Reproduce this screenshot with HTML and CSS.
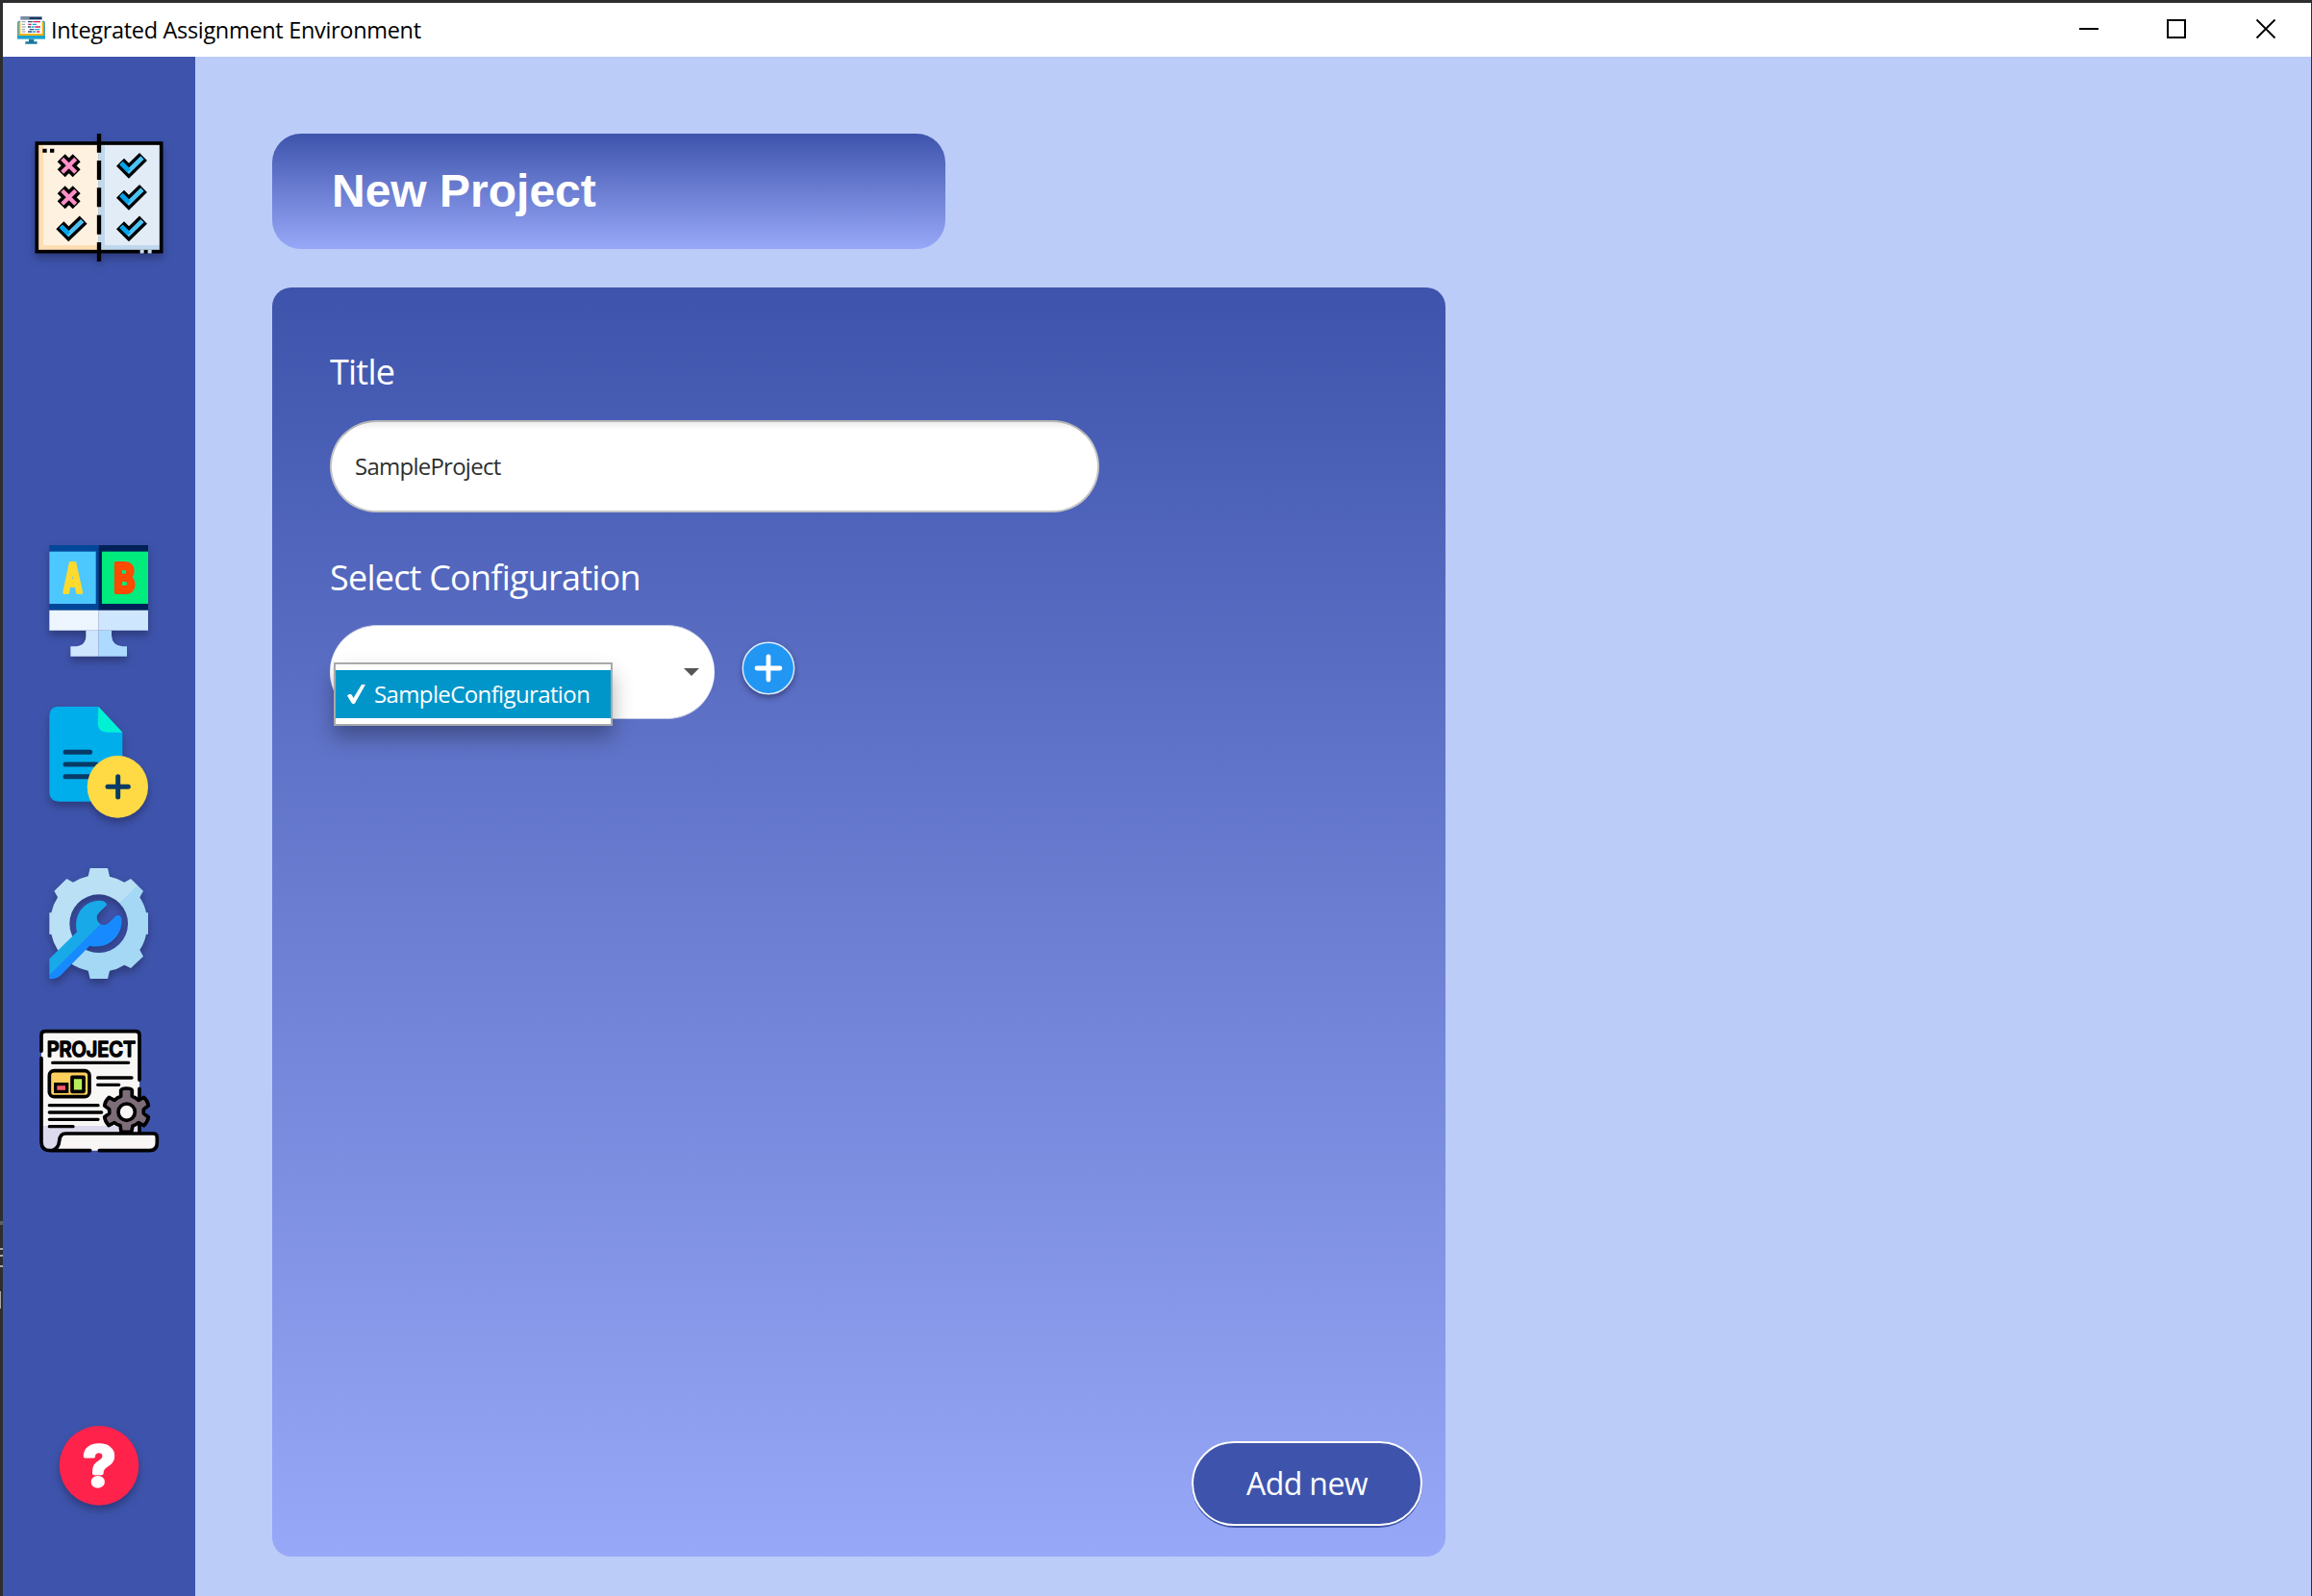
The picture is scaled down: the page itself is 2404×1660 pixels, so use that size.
FILE: index.html
```html
<!DOCTYPE html>
<html lang="en">
<head>
<meta charset="utf-8">
<title>Integrated Assignment Environment</title>
<link rel="stylesheet" href="styles.css">
</head>
<body>
<div class="window">
  <header class="titlebar">
    <svg class="app-icon" viewBox="0 0 87 87">
      <rect x="0" y="14" width="87" height="70" rx="5" fill="#4fa3b5"/>
      <rect x="5" y="18" width="77" height="44" fill="#ffb60a"/>
      <rect x="0" y="60" width="87" height="11" fill="#1aa3cf"/>
      <path d="M0 71H87V87H0Z" fill="#fff"/>
      <path d="M36 71H52V79H62V86H25V79H36Z" fill="#17789b"/>
      <rect x="10" y="0" width="67" height="54" fill="#fff"/>
      <path d="M10 0H77V11H10Z" fill="#7b8ca5"/>
      <path d="M38 3H76V9H38Z" fill="#123a63"/>
      <path d="M14 17H26M14 25H24M14 33H26M14 41H24M14 48H26" stroke="#8a96a8" stroke-width="3"/>
      <path d="M33 17H47M33 33H43M38 41H52M33 48H46" stroke="#2b4f78" stroke-width="4"/>
      <path d="M49 17H72M34 25H44M55 33H72M60 48H70" stroke="#d71c5b" stroke-width="4"/>
      <path d="M47 25H60M45 33H53M54 41H70M48 48H57" stroke="#1ba6d2" stroke-width="4"/>
    </svg>
    <span class="app-title">Integrated Assignment Environment</span>
    <svg class="controls" viewBox="0 0 212 24" fill="none" stroke="#000" stroke-width="2">
      <path d="M0 11H20"/><rect x="92" y="2" width="18" height="18"/><path d="M184.500 1.500L203.500 20.500M203.500 1.500L184.500 20.500" stroke-width="1.800"/>
    </svg>
  </header>
  <div class="body">
    <nav class="sidebar">
      <svg class="icon compare" viewBox="0 0 510 480">
        <path d="M55 72H248V410H55Z" fill="#fff1e0"/>
        <path d="M60 77H75V390H248V405H60Z" fill="#ffddb3"/>
        <path d="M248 72H442V410H248Z" fill="#e2ecf6"/>
        <path d="M248 77H267V390H437V405H248Z" fill="#c0d7ec"/>
        <rect x="55" y="72" width="388" height="338" fill="none" stroke="#000" stroke-width="11"/>
        <path d="M73 95H86M96 95H109" stroke="#000" stroke-width="12"/>
        <path d="M377 410H389M401 410H413" stroke="#c9dcef" stroke-width="11"/>
        <path d="M249 42V101M249 126V186M249 211V271M249 296V356M249 381V441" stroke="#000" stroke-width="13"/>
        <g fill="none">
          <path d="M131 118L179 166M179 118L131 166M131 217L179 265M179 217L131 265" stroke="#000" stroke-width="34"/>
          <path d="M134 121L176 163M176 121L134 163M134 220L176 262M176 220L134 262" stroke="#ff8fc8" stroke-width="13"/>
        </g>
        <g fill="none">
          <path d="M315 131L342 158L387 114M315 230L342 257L387 213M315 328L342 355L387 311M127 328L154 355L200 311" stroke="#000" stroke-width="34"/>
          <path d="M318 134L342 158L384 117M318 233L342 257L384 216M318 331L342 355L384 314M130 331L154 355L197 314" stroke="#4dc3f5" stroke-width="14"/>
          <path d="M318 134L342 158M318 233L342 257M318 331L342 355M130 331L154 355" stroke="#00a5ed" stroke-width="14"/>
        </g>
      </svg>
      <svg class="icon abtest" viewBox="0 0 450 450">
        <path d="M64 51H218V254H64Z" fill="#004799"/><path d="M218 51H372V254H218Z" fill="#002157"/>
        <rect x="64" y="71" width="145" height="163" fill="#4dc8ff"/><rect x="228" y="71" width="144" height="163" fill="#00ec7c"/>
        <path d="M64 254H218V317H64Z" fill="#edf5ff"/><path d="M218 254H372V317H218Z" fill="#cfe6ff"/>
        <path d="M178 317H218V398H130V367H145Q178 365 178 333Z" fill="#cfe6ff"/>
        <path d="M218 317H258V333Q260 365 292 367H306V398H218Z" fill="#addaff"/>
        <text class="glyph" x="108" y="198" font-size="124" textLength="58" lengthAdjust="spacingAndGlyphs" fill="#ffda2d" stroke="#ffda2d" stroke-width="12">A</text>
        <text class="glyph" x="265" y="198" font-size="124" textLength="66" lengthAdjust="spacingAndGlyphs" fill="#ff4b00" stroke="#ff4b00" stroke-width="12">B</text>
      </svg>
      <svg class="icon adddoc" viewBox="0 0 450 450">
        <path d="M90 45H217L292 125V341H92Q64 339 64 313V73Q64 47 90 45Z" fill="#00aeec"/>
        <path d="M217 45L292 125H245Q215 125 215 97Z" fill="#00f1d4"/>
        <path d="M114 187H191M114 225H210M114 263H200" stroke="#083b66" stroke-width="15" stroke-linecap="round"/>
        <ellipse cx="277" cy="295" rx="95" ry="97" fill="#ffda44"/>
        <path d="M246 295H310M278 263V327" stroke="#083b66" stroke-width="15" stroke-linecap="round"/>
      </svg>
      <svg class="icon settings" viewBox="0 0 450 450">
        <defs>
          <clipPath id="edge"><path d="M64 0H372V450H64Z"/></clipPath>
          <mask id="hole"><path d="M0 0H450V450H0Z" fill="#fff"/><circle cx="218" cy="212" r="91" fill="#000"/></mask>
          <linearGradient id="gear" x1="64" y1="58" x2="372" y2="366" gradientUnits="userSpaceOnUse"><stop offset=".5" stop-color="#b9e0f5"/><stop offset=".5" stop-color="#a4d8f5"/></linearGradient>
          <linearGradient id="wrench" x1="64" y1="58" x2="372" y2="366" gradientUnits="userSpaceOnUse"><stop offset=".51" stop-color="#18aae8"/><stop offset=".51" stop-color="#178aff"/></linearGradient>
        </defs>
        <g clip-path="url(#edge)"><g mask="url(#hole)">
          <path fill="url(#gear)" d="M191 39H246L252 65Q276 70 298 83L318 72L357 110L346 130Q362 155 366 178H390V245H366Q361 272 346 294L357 314L318 351L298 341Q276 355 252 359L246 384H191L185 359Q160 354 138 341L90 294Q75 270 70 245H50V178H70Q75 153 90 130L79 110L118 72L138 83Q160 70 185 64Z"/>
        </g></g>
        <path fill="url(#wrench)" d="M64 322L150 238C138 188 168 142 218 140Q243 140 243 154L219 178A21 21 0 0 0 249 210L270 189Q284 180 289 195C295 250 245 295 190 281L97 376Q87 384 75 384H64Z"/>
      </svg>
      <svg class="icon project" viewBox="0 0 450 450">
        <path d="M39 50Q39 38 51 38H333Q345 38 345 50V357H388Q400 357 400 369V388Q398 410 378 410H62Q39 408 39 386Z" fill="#f9f7f6"/>
        <path d="M44 333H345V357H115Q97 357 96 378Q93 407 72 405Q44 407 44 380Z" fill="#dedaee"/>
        <path d="M39 100V50Q39 38 51 38H333Q345 38 345 50V190M345 217V350M39 122V384Q40 410 66 410H191M220 410H378Q400 408 400 386V369Q400 357 388 357H115Q97 357 95 380Q93 404 72 410" fill="none" stroke="#000" stroke-width="11" stroke-linecap="round"/>
        <text class="glyph light" x="56" y="116" font-size="64" textLength="277" lengthAdjust="spacingAndGlyphs" stroke="#000" stroke-width="5">PROJECT</text>
        <path d="M74 136H311M215 183H321M215 205H281M64 269H216M64 291H227M64 313H216M64 335H138" stroke="#000" stroke-width="10" stroke-linecap="round"/>
        <rect x="64" y="161" width="125" height="81" rx="15" fill="#ffd05b" stroke="#000" stroke-width="11"/>
        <path d="M83 203H119V226H83Z" fill="#ff5d6c" stroke="#000" stroke-width="10"/>
        <path d="M135 181H171V226H135Z" fill="#b9ec5a" stroke="#000" stroke-width="11" stroke-linejoin="round"/>
        <path d="M288 352L285 332Q275 330 267 323L249 332Q237 318 236 305L251 294V281L236 270Q238 255 250 244L267 253Q276 245 287 241V222Q290 216 304 216Q320 216 322 222V241Q333 245 342 253L359 244Q371 255 373 270L358 281V294L373 306Q371 320 359 332L342 323Q333 331 324 333L320 352Z" fill="#7d6d78" stroke="#000" stroke-width="11" stroke-linejoin="round"/>
        <circle cx="305" cy="290" r="26" fill="#f9f7f6" stroke="#000" stroke-width="11"/>
      </svg>
      <svg class="icon help" viewBox="0 0 450 330">
        <circle cx="189" cy="163" r="124" fill="#ff234b"/>
        <text class="glyph" x="139" y="226" font-size="168" textLength="102" lengthAdjust="spacingAndGlyphs" fill="#fff" stroke="#fff" stroke-width="10">?</text>
      </svg>
    </nav>
    <main class="content">
      <h1 class="heading"><span>New Project</span></h1>
      <section class="panel">
        <label class="label t-title">Title</label>
        <div class="field"><span class="t-value">SampleProject</span></div>
        <label class="label t-select">Select Configuration</label>
        <div class="row">
          <div class="combo">
            <i class="arrow"></i>
            <div class="popup"><div class="option">
              <svg class="check" viewBox="0 0 20 20"><path d="M1 11.500Q4 9 6 11L7.500 14L16 0H20L9 19.500Q7 21 5.500 19Z" fill="#fff"/></svg>
              <span class="t-option">SampleConfiguration</span>
            </div></div>
          </div>
          <svg class="plus" viewBox="0 0 56 56"><circle cx="28" cy="28" r="26.700" fill="#2196f3" stroke="#dcecfb" stroke-width="1.500"/><path d="M16 28H40M28 16V40" stroke="#fff" stroke-width="4.800" stroke-linecap="round"/></svg>
        </div>
        <button class="add"><span class="t-add">Add new</span></button>
      </section>
    </main>
  </div>
</div>
</body>
</html>
```
FILE: styles.css
```css
* { box-sizing: border-box; }
body { margin: 0; background: #303133; font-family: "Open Sans", "Noto Sans", sans-serif; }
.window {
  width: 2404px; height: 1660px; padding: 3px 1px 1px 3px; display: flex; flex-direction: column;
  background:
    linear-gradient(#5a6361, #5a6361) 0 1270px / 3px 4px no-repeat,
    linear-gradient(#a9a9a9, #a9a9a9) 0 1298px / 3px 2px no-repeat,
    linear-gradient(#a9a9a9, #a9a9a9) 0 1305px / 3px 2px no-repeat,
    linear-gradient(#a9a9a9, #a9a9a9) 0 1316px / 3px 2px no-repeat,
    linear-gradient(#a9a9a9, #a9a9a9) 0 1343px / 1px 18px no-repeat,
    #2d2e30;
}
.titlebar { height: 56px; background: #fff; display: flex; align-items: center; padding: 0 37px 0 15px; flex: none; }
.app-icon { width: 29px; height: 29px; }
.app-title { margin-left: 6px; font-size: 23.500px; line-height: 32px; letter-spacing: -0.320px; color: #000; white-space: nowrap; }
.controls { width: 212px; height: 24px; margin-left: auto; margin-right: -8px; }
.body { flex: 1; display: flex; }
.sidebar { width: 200px; background: #3e54ac; padding: 66px 0 0 17px; display: flex; flex-direction: column; }
.icon { display: block; width: 150px; height: 150px; margin: 0 0 20px 10px; flex: none; filter: drop-shadow(0 5px 4px rgba(20, 20, 50, .4)); }
.compare { width: 170px; height: 160px; margin: 0 0 265px; }
.project { filter: none; margin-bottom: 260px; }
.help { height: 110px; margin-left: 20px; }
.glyph { font-family: Inter, sans-serif; font-weight: 700; stroke-linejoin: round; }
.light { font-weight: 500; }
.content { flex: 1; background: #bbccf8; padding: 80px; }
.heading { margin: 0 0 40px; width: 700px; height: 120px; border-radius: 30px; padding: 0 0 2px 62px; display: flex; align-items: center; background: linear-gradient(#3e54ac, #98a8f8); color: #fff; font: bold 48px "Liberation Sans", sans-serif; }
.panel { width: 1220px; height: 1320px; border-radius: 20px; background: linear-gradient(#3e54ac, #98a8f8); padding: 60px 24px 30px 60px; display: flex; flex-direction: column; }
.label { display: block; height: 56px; line-height: 56px; font-size: 36px; letter-spacing: -0.780px; color: #fff; white-space: nowrap; font-weight: 400; }
.field { width: 800px; height: 96px; margin: 22px 0 40px; border: 2px solid #c4c4c4; border-top-color: #b5b5b5; border-radius: 48px; background: linear-gradient(#ececec, #fff 8px); padding: 0 0 2px 24px; display: flex; align-items: center; font-size: 24px; letter-spacing: -0.750px; color: #2f2f2f; }
.row { display: flex; margin-top: 21px; }
.combo { position: relative; width: 400px; height: 98px; border-radius: 49px; background: #fff; border-top: 1px solid #c4c9e2; border-bottom: 1px solid #c4c9e2; display: flex; align-items: center; justify-content: flex-end; padding-right: 16px; }
.arrow { width: 16px; height: 8px; background: #555; clip-path: polygon(0 0, 100% 0, 50% 100%); }
.popup { position: absolute; left: 4px; top: 38px; width: 290px; height: 66px; padding: 6px 0; background: #fff; border: 2px solid #a9a9a9; box-shadow: 0 12px 20px rgba(0, 0, 0, .3); }
.option { height: 50px; background: #0096c9; color: #fff; display: flex; align-items: center; padding-left: 11px; font-size: 24px; letter-spacing: -0.620px; }
.check { width: 20px; height: 20px; }
.t-option { margin-left: 9px; padding-bottom: 1px; white-space: nowrap; }
.plus { width: 56px; height: 56px; margin: 17px 0 0 28px; filter: drop-shadow(0 3px 3px rgba(20, 20, 50, .45)); }
.add { margin-top: auto; align-self: flex-end; width: 240px; height: 90px; border: 0; padding: 0; border-radius: 45px; background: #3e54ac; color: #fff; font: 32px "Open Sans", sans-serif; letter-spacing: -0.600px; display: flex; }
.t-add { width: 240px; height: 88px; padding-bottom: 2px; border: 2px solid #fff; border-radius: 44px; display: flex; align-items: center; justify-content: center; }
```
